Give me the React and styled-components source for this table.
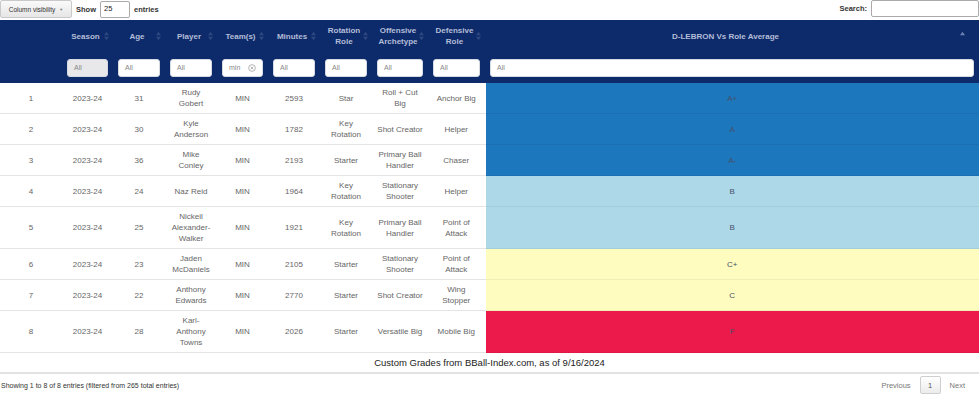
import React from 'react';
import styled, { createGlobalStyle } from 'styled-components';

const GlobalStyle = createGlobalStyle`
  body {
    margin: 0;
    background: #fff;
    font-family: "Liberation Sans", Arial, sans-serif;
  }
`;

// 열 정의 (너비, 제목, 필터 값)
const columns = [
  { key: 'rank', width: 62, label: '', filter: null },
  { key: 'season', width: 51, label: 'Season', filter: 'All', disabled: true },
  { key: 'age', width: 52, label: 'Age', filter: 'All' },
  { key: 'player', width: 52, label: 'Player', filter: 'All' },
  { key: 'team', width: 51, label: 'Team(s)', filter: 'min', clear: true },
  { key: 'minutes', width: 52, label: 'Minutes', filter: 'All' },
  { key: 'rotation', width: 52, label: 'Rotation Role', filter: 'All' },
  { key: 'offense', width: 56, label: 'Offensive Archetype', filter: 'All' },
  { key: 'defense', width: 57, label: 'Defensive Role', filter: 'All' },
  { key: 'grade', width: null, label: 'D-LEBRON Vs Role Average', filter: 'All', sorted: true },
];

const rows = [
  [1, '2023-24', 31, 'Rudy Gobert', 'MIN', 2593, 'Star', 'Roll + Cut Big', 'Anchor Big', 'A+'],
  [2, '2023-24', 30, 'Kyle Anderson', 'MIN', 1782, 'Key Rotation', 'Shot Creator', 'Helper', 'A'],
  [3, '2023-24', 36, 'Mike Conley', 'MIN', 2193, 'Starter', 'Primary Ball Handler', 'Chaser', 'A-'],
  [4, '2023-24', 24, 'Naz Reid', 'MIN', 1964, 'Key Rotation', 'Stationary Shooter', 'Helper', 'B'],
  [5, '2023-24', 25, 'Nickeil Alexander-Walker', 'MIN', 1921, 'Key Rotation', 'Primary Ball Handler', 'Point of Attack', 'B'],
  [6, '2023-24', 23, 'Jaden McDaniels', 'MIN', 2105, 'Starter', 'Stationary Shooter', 'Point of Attack', 'C+'],
  [7, '2023-24', 22, 'Anthony Edwards', 'MIN', 2770, 'Starter', 'Shot Creator', 'Wing Stopper', 'C'],
  [8, '2023-24', 28, 'Karl-Anthony Towns', 'MIN', 2026, 'Starter', 'Versatile Big', 'Mobile Big', 'F'],
];

const gradeColor = (grade) => {
  if (grade.startsWith('A')) return '#1c77bd';
  if (grade.startsWith('B')) return '#add8e8';
  if (grade.startsWith('C')) return '#fefcbf';
  return '#ec1a4a';
};

const SortIcon = ({ up }) => (
  <SortMark viewBox="0 0 6 10" width="5" height="9">
    <path d="M3 0 L6 4 L0 4 Z" fill={up ? '#6f81b0' : '#2f467f'} />
    {!up && <path d="M3 10 L6 6 L0 6 Z" fill="#2f467f" />}
  </SortMark>
);

const ClearIcon = () => (
  <svg width="8" height="8" viewBox="0 0 10 10">
    <circle cx="5" cy="5" r="4.2" fill="none" stroke="#999" strokeWidth="0.9" />
    <path d="M3.3 3.3 L6.7 6.7 M6.7 3.3 L3.3 6.7" stroke="#999" strokeWidth="0.9" />
  </svg>
);

const App = () => {
  return (
    <>
      <GlobalStyle />
      <Page>
        <TopBar>
          <LengthControl>
            <ColumnButton>
              Column visibility <Caret>▼</Caret>
            </ColumnButton>
            <Label>Show</Label>
            <SmallInput width={30}>25</SmallInput>
            <Label>entries</Label>
          </LengthControl>
          <SearchControl>
            <Label>Search:</Label>
            <SmallInput width={108} />
          </SearchControl>
        </TopBar>

        <Table>
          <colgroup>
            {columns.map((c) => (
              <col key={c.key} style={c.width ? { width: c.width } : undefined} />
            ))}
          </colgroup>
          <thead>
            <HeadRow>
              {columns.map((c) => (
                <HeadCell key={c.key} wide={!c.width}>
                  {c.label}
                  {c.label && <SortSlot wide={!c.width}><SortIcon up={c.sorted} /></SortSlot>}
                </HeadCell>
              ))}
            </HeadRow>
            <FilterRow>
              {columns.map((c) => (
                <FilterCell key={c.key}>
                  {c.filter && (
                    <FilterBox disabled={c.disabled}>
                      <span>{c.filter}</span>
                      {c.clear && <ClearIcon />}
                    </FilterBox>
                  )}
                </FilterCell>
              ))}
            </FilterRow>
          </thead>
          <tbody>
            {rows.map((r) => (
              <BodyRow key={r[0]}>
                {r.slice(0, 9).map((v, i) => (
                  <Cell key={i}>{v}</Cell>
                ))}
                <GradeCell bg={gradeColor(r[9])}>{r[9]}</GradeCell>
              </BodyRow>
            ))}
          </tbody>
        </Table>

        <Caption>Custom Grades from BBall-Index.com, as of 9/16/2024</Caption>

        <Footer>
          <Info>Showing 1 to 8 of 8 entries (filtered from 265 total entries)</Info>
          <Pager>
            <PageLink>Previous</PageLink>
            <PageButton>1</PageButton>
            <PageLink>Next</PageLink>
          </Pager>
        </Footer>
      </Page>
    </>
  );
};

export default App;

// --- Styled Components ---

const Page = styled.div`
  width: 979px;
  color: #333;
`;

const TopBar = styled.div`
  display: flex;
  justify-content: space-between;
  align-items: flex-start;
  height: 20px;
`;

const LengthControl = styled.div`
  display: flex;
  align-items: center;
  gap: 4px;
  height: 18px;
`;

const SearchControl = styled.div`
  display: flex;
  align-items: center;
  gap: 4px;
`;

const ColumnButton = styled.div`
  width: 72px;
  height: 18px;
  box-sizing: border-box;
  border: 1px solid #c9c9c9;
  border-radius: 2px;
  background: linear-gradient(to bottom, #fafafa, #e6e6e6);
  font-size: 6.5px;
  color: #333;
  display: flex;
  align-items: center;
  justify-content: center;
  gap: 4px;
`;

const Caret = styled.span`
  font-size: 4px;
  color: #777;
`;

const Label = styled.span`
  font-size: 7.5px;
  font-weight: bold;
  color: #333;
`;

const SmallInput = styled.div`
  width: ${(p) => p.width}px;
  height: 17px;
  box-sizing: border-box;
  border: 1px solid #aaa;
  border-radius: 2px;
  background: #fff;
  font-size: 7.5px;
  padding: 2px 3px;
  color: #222;
`;

const Table = styled.table`
  width: 979px;
  border-collapse: collapse;
  table-layout: fixed;
`;

const HeadRow = styled.tr`
  background: #0d2b6b;
  height: 32px;
`;

const HeadCell = styled.th`
  position: relative;
  padding: 4px ${(p) => (p.wide ? '18px' : '9px')} 4px 5px;
  font-size: 8px;
  line-height: 11px;
  font-weight: bold;
  color: #b4bdd8;
  text-align: center;
  vertical-align: middle;
`;

const SortSlot = styled.span`
  position: absolute;
  right: ${(p) => (p.wide ? '14px' : '4px')};
  top: 50%;
  transform: translateY(-50%);
  display: flex;
`;

const SortMark = styled.svg`
  display: block;
`;

const FilterRow = styled.tr`
  background: #0d2b6b;
  height: 31px;
`;

const FilterCell = styled.td`
  padding: 0 5px;
  vertical-align: middle;
`;

const FilterBox = styled.div`
  height: 18px;
  box-sizing: border-box;
  border-radius: 3px;
  background: ${(p) => (p.disabled ? '#e8e8ea' : '#fff')};
  border: 1px solid #d6d9e2;
  padding: 0 6px;
  display: flex;
  align-items: center;
  justify-content: space-between;
  font-size: 7px;
  color: #888;
`;

const BodyRow = styled.tr`
  background: #fff;
`;

const Cell = styled.td`
  padding: 4px 5px;
  font-size: 8px;
  line-height: 11px;
  color: #666;
  text-align: center;
  vertical-align: middle;
  border-bottom: 1px solid #e4e4e4;
`;

const GradeCell = styled(Cell)`
  background: ${(p) => p.bg};
  color: #46506a;
  border-left: 1px solid #fff;
  border-bottom: 1px solid rgba(0, 0, 0, 0.05);
`;

const Caption = styled.div`
  text-align: center;
  font-size: 9.5px;
  color: #222;
  height: 19px;
  line-height: 19px;
  border-bottom: 2px solid #e2e2e2;
`;

const Footer = styled.div`
  display: flex;
  justify-content: space-between;
  align-items: center;
  height: 22px;
`;

const Info = styled.span`
  font-size: 7px;
  color: #333;
  padding-left: 1px;
`;

const Pager = styled.div`
  display: flex;
  align-items: center;
  gap: 4px;
  padding-right: 9px;
`;

const PageLink = styled.span`
  font-size: 7.5px;
  color: #777;
  padding: 0 5px;
`;

const PageButton = styled.span`
  width: 21px;
  height: 18px;
  box-sizing: border-box;
  border: 1px solid #cfcfcf;
  border-radius: 2px;
  background: linear-gradient(to bottom, #fff, #ececec);
  font-size: 7.5px;
  color: #555;
  display: flex;
  align-items: center;
  justify-content: center;
`;
